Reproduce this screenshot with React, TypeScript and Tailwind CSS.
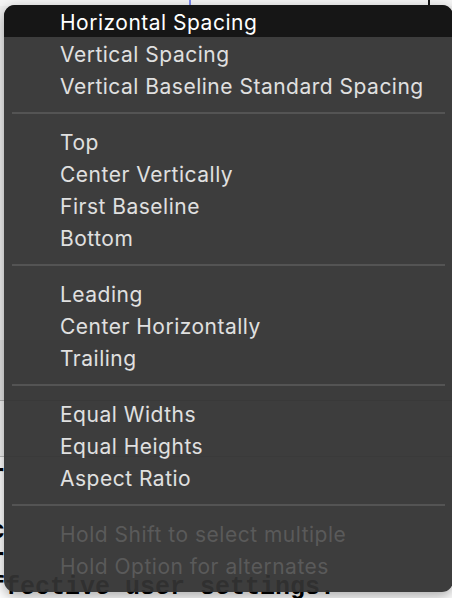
import React from "react";

type Item = { label: string; selected?: boolean; disabled?: boolean };

const groups: Item[][] = [
  [
    { label: "Horizontal Spacing", selected: true },
    { label: "Vertical Spacing" },
    { label: "Vertical Baseline Standard Spacing" },
  ],
  [
    { label: "Top" },
    { label: "Center Vertically" },
    { label: "First Baseline" },
    { label: "Bottom" },
  ],
  [
    { label: "Leading" },
    { label: "Center Horizontally" },
    { label: "Trailing" },
  ],
  [
    { label: "Equal Widths" },
    { label: "Equal Heights" },
    { label: "Aspect Ratio" },
  ],
  [
    { label: "Hold Shift to select multiple", disabled: true },
    { label: "Hold Option for alternates", disabled: true },
  ],
];

function MenuRow({ item }: { item: Item }) {
  const color = item.selected
    ? "bg-[#161616] text-white"
    : item.disabled
      ? "text-[#5a5a5a]"
      : "text-[#e0e0e0]";
  return (
    <div className={`flex h-8 items-center pl-14 pt-[2px] ${color}`}>
      <span className="leading-none">{item.label}</span>
    </div>
  );
}

export default function App() {
  return (
    <div className="relative h-[598px] w-[452px] overflow-hidden bg-[#ededed] font-['Inter',sans-serif]">
      {/* window behind the menu */}
      <div className="flex h-[6px] bg-[#f6f6f6]">
        <div className="w-[189px]" />
        <div className="w-[2px] bg-[#7f8cf0]" />
        <div className="w-[237px]" />
        <div className="w-[2px] bg-[#111]" />
      </div>
      <div className="h-[334px] bg-[#f0f0f0]" />
      <div className="h-[60px] bg-[#e4e4e4]" />
      <div className="h-px bg-[#b5b5b5]" />
      <div className="h-[55px] bg-[#f2f2f2]" />
      <div className="h-px bg-[#c4c4c4]" />
      <div className="bg-white pt-[5px] font-['Liberation_Mono',monospace] text-[25px] font-bold leading-[28px] text-black">
        <div className="-ml-[10px]">r</div>
        <div className="-ml-[10px]">.</div>
        <div className="-ml-[10px]">c</div>
        <div className="-ml-[10px]">r</div>
        <div className="-ml-[10px]">ffective user settings.</div>
      </div>

      {/* context menu */}
      <div className="absolute left-[4px] top-[5px] w-[449px] overflow-hidden rounded-[11px] bg-[#333333]/[0.95] text-[21px] tracking-[0.5px] shadow-[0_4px_14px_rgba(0,0,0,0.35)]">
        {groups.map((g, gi) => (
          <div key={gi}>
            {gi > 0 && (
              <div className="flex h-6 items-center px-2">
                <div className="h-[2px] w-full bg-[#545454]" />
              </div>
            )}
            {g.map((item) => (
              <MenuRow key={item.label} item={item} />
            ))}
          </div>
        ))}
        <div className="h-[11px]" />
      </div>
    </div>
  );
}
